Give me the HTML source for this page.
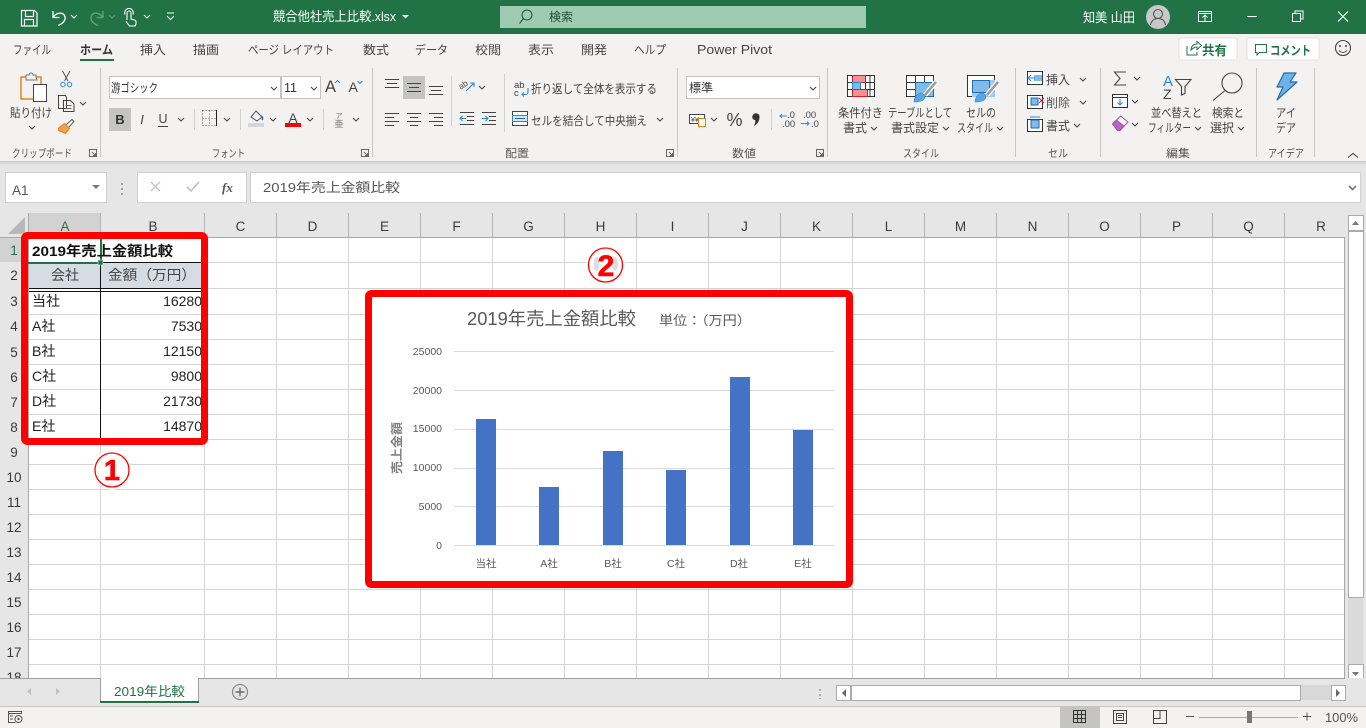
<!DOCTYPE html>
<html lang="ja"><head><meta charset="utf-8"><title>競合他社売上比較.xlsx</title>
<style>
html,body{margin:0;padding:0;width:1366px;height:728px;overflow:hidden;background:#fff}
svg{display:block}
text{font-family:"Liberation Sans","Noto Sans CJK JP",sans-serif;font-size:12px;fill:#444}
.w{fill:#fff}.g{fill:#595959}
.h{font-size:13.5px;fill:#3a3a3a;text-anchor:middle}
.c{font-size:14px;fill:#222}
.l{font-size:11px;fill:#555}
.a{font-size:10.5px;fill:#595959;text-anchor:end}
.x{font-size:10.5px;fill:#595959;text-anchor:middle}
.ch{fill:none;stroke:#444;stroke-width:1.1}
</style></head><body>
<svg width="1366" height="728" viewBox="0 0 1366 728" xmlns="http://www.w3.org/2000/svg">
<defs>
<path id="cv" d="M0 0l3 3 3-3" fill="none" stroke="#444" stroke-width="1.1"/>
<path id="lc" d="M0.5 0.5h7v7h-7zM3 3l3.5 3.5M6.5 4v2.5H4" fill="none" stroke="#666" stroke-width="1"/>
<linearGradient id="sh" x1="0" y1="0" x2="0" y2="1"><stop offset="0" stop-color="#c9c9c9"/><stop offset="1" stop-color="#e6e6e6"/></linearGradient>
</defs>

<!-- base -->
<rect width="1366" height="728" fill="#e6e6e6"/>
<rect width="1366" height="34" fill="#217346"/>
<rect y="34" width="1366" height="127" fill="#f3f2f1"/>
<rect y="161" width="1366" height="4" fill="url(#sh)"/>

<!-- title bar -->
<path d="M21.5 10.5h13l2.5 2.5v13h-15.500zM25.500 10.500v6h8v-6M24.500 25.500v-6h9v6" fill="none" stroke="#fff" stroke-width="1.200"/>
<path d="M53 11v6.500h6.500M53 17.500C57 11 66 12 65 19C64.500 22 61 24.500 58 25.500" fill="none" stroke="#fff" stroke-width="1.300"/>
<path d="M71 15l3 3 3-3" fill="none" stroke="#fff"/>
<path d="M103 11v6.500h-6.500M103 17.500C99 11 90 12 91 19C91.500 22 95 24.500 98 25.500" fill="none" stroke="#66a182" stroke-width="1.300"/>
<path d="M109 15l3 3 3-3" fill="none" stroke="#66a182"/>
<path d="M127 20V13a2 2 0 0 1 4 0v6l3.500 1a2 2 0 0 1 1.500 2v2l-1 2h-5.500l-3.500-4.500M125 14.500a4.500 4.500 0 0 1 3-6h2a4.500 4.500 0 0 1 3 6" fill="none" stroke="#fff" stroke-width="1.100"/>
<path d="M144 15l3 3 3-3" fill="none" stroke="#fff"/>
<path d="M167 13h7M167 16l3.500 3.500 3.500-3.500" fill="none" stroke="#fff"/>
<text x="273" y="21" class="w" style="font-size:13px" textLength="123" lengthAdjust="spacingAndGlyphs">競合他社売上比較.xlsx</text>
<path d="M402 15h7l-3.500 3.500z" fill="#fff"/>
<rect x="500" y="6" width="366" height="22" fill="#9fcbb2"/>
<circle cx="527" cy="15" r="5" fill="none" stroke="#1f5c3c" stroke-width="1.100"/><path d="M523.500 18.500l-4 5" stroke="#1f5c3c" stroke-width="1.100"/>
<text x="549" y="21" style="font-size:12px;fill:#1f4e35">検索</text>
<text x="1083" y="22" class="w" style="font-size:13px" textLength="52" lengthAdjust="spacingAndGlyphs">知美 山田</text>
<circle cx="1158" cy="17" r="12" fill="#c8c8c8"/><circle cx="1158" cy="14" r="4.500" fill="none" stroke="#555" stroke-width="1.100"/><path d="M1150.500 25c1-5 4-6.500 7.500-6.500s6.500 1.500 7.500 6.500" fill="none" stroke="#555" stroke-width="1.100"/>
<path d="M1198.500 11.500h13v10h-13zM1198.500 13.500h13M1205 21v-6M1202.500 17.500l2.500-2.500 2.500 2.500" fill="none" stroke="#fff"/>
<path d="M1247 16.500h10" stroke="#fff"/>
<path d="M1292.500 13.500h8v8h-8zM1295 13.500v-2.500h8v8h-2.500" fill="none" stroke="#fff"/>
<path d="M1338 11.500l10 10M1348 11.500l-10 10" stroke="#fff" stroke-width="1.100"/>

<!-- tabs -->
<g style="font-size:12.500px">
<text x="13" y="54" textLength="38" lengthAdjust="spacingAndGlyphs">ファイル</text>
<text x="80" y="54" style="font-weight:700;fill:#333" textLength="33" lengthAdjust="spacingAndGlyphs">ホーム</text>
<text x="140" y="54" textLength="26" lengthAdjust="spacingAndGlyphs">挿入</text>
<text x="193" y="54" textLength="26" lengthAdjust="spacingAndGlyphs">描画</text>
<text x="248" y="54" textLength="86" lengthAdjust="spacingAndGlyphs">ページ レイアウト</text>
<text x="363" y="54" textLength="26" lengthAdjust="spacingAndGlyphs">数式</text>
<text x="415" y="54" textLength="33" lengthAdjust="spacingAndGlyphs">データ</text>
<text x="475" y="54" textLength="26" lengthAdjust="spacingAndGlyphs">校閲</text>
<text x="528" y="54" textLength="26" lengthAdjust="spacingAndGlyphs">表示</text>
<text x="581" y="54" textLength="26" lengthAdjust="spacingAndGlyphs">開発</text>
<text x="634" y="54" textLength="32" lengthAdjust="spacingAndGlyphs">ヘルプ</text>
<text x="697" y="54" style="font-size:13px" textLength="75" lengthAdjust="spacingAndGlyphs">Power Pivot</text>
</g>
<rect x="80" y="59" width="34" height="2" fill="#217346"/>
<rect x="1179" y="38" width="58" height="22" rx="2" fill="#fff" stroke="#e5e3e1"/>
<path d="M1187 46v9h10v-3M1191 50c0-4 3-6 6-6v-2.500l4.500 4-4.500 4V47c-2 0-4 1-6 3z" fill="none" stroke="#217346"/>
<text x="1202" y="55" style="font-size:13px;font-weight:700;fill:#217346" textLength="25" lengthAdjust="spacingAndGlyphs">共有</text>
<rect x="1247" y="38" width="72" height="22" rx="2" fill="#fff" stroke="#e5e3e1"/>
<path d="M1255.500 44.500h11v8h-7l-2.500 2.500v-2.500h-1.500z" fill="none" stroke="#217346"/>
<text x="1270" y="55" style="font-size:12.500px;font-weight:700;fill:#217346" textLength="41" lengthAdjust="spacingAndGlyphs">コメント</text>
<circle cx="1343" cy="48" r="7.500" fill="none" stroke="#444" stroke-width="1.100"/><circle cx="1340" cy="46" r="1" fill="#444"/><circle cx="1346" cy="46" r="1" fill="#444"/><path d="M1339 50.500c2 2.500 6 2.500 8 0" fill="none" stroke="#444"/>

<!-- ribbon dividers -->
<path d="M100.500 68v89M372.500 68v89M677.500 68v89M827.500 68v89M1015.500 68v89M1100.500 68v89M1256.500 68v89M1314.500 68v89" stroke="#c6c6c6"/>
<path d="M194.500 109v21M240.500 109v21M323.500 109v21M451.500 76v50M504.500 74v58M771.500 109v21" stroke="#d0d0d0"/>

<!-- clipboard -->
<path d="M21 77h20v22H21z" fill="#f3f2f1" stroke="#e6811a" stroke-width="1.500"/>
<path d="M26 77v-2h3a2 2 0 0 1 4 0h3v2l1 3H26z" fill="#f3f2f1" stroke="#777"/>
<rect x="33.500" y="84.500" width="13" height="17" fill="#fff" stroke="#444"/>
<text x="10" y="117" textLength="42" lengthAdjust="spacingAndGlyphs">貼り付け</text>
<use href="#cv" x="29" y="126"/>
<path d="M62.500 71l5.500 10M70 71l-5.500 10" stroke="#555" fill="none"/><circle cx="63" cy="84.500" r="2.200" fill="none" stroke="#2b88d8"/><circle cx="69.500" cy="84.500" r="2.200" fill="none" stroke="#2b88d8"/>
<path d="M58.500 95.500h7l1 2v11h-8zM63.500 100.500h7l3.500 3.500v7.500H63.500z" fill="#f3f2f1" stroke="#444"/><path d="M65.500 105.500h6M65.500 108.500h6" stroke="#666"/>
<use href="#cv" x="80" y="102"/>
<path d="M66 125l6-5.500 2 2-5.500 6" fill="#fff" stroke="#555"/><path d="M58.500 128l6-4.500 5 5-4 5-7-3z" fill="#f0a24d" stroke="#e6811a"/>

<!-- font -->
<rect x="109.500" y="76.500" width="171" height="22" fill="#fff" stroke="#c4c4c4"/>
<rect x="281.500" y="76.500" width="39" height="22" fill="#fff" stroke="#c4c4c4"/>
<text x="111" y="92" textLength="47" lengthAdjust="spacingAndGlyphs" style="fill:#333">游ゴシック</text>
<text x="284" y="92" style="fill:#333;font-size:12.500px">11</text>
<use href="#cv" x="271" y="87"/><use href="#cv" x="311" y="87"/>
<text x="325" y="92" style="font-size:16.500px;fill:#444">A</text><path d="M335 83l2.500-2.500 2.500 2.500" fill="none" stroke="#2b88d8"/>
<text x="348.500" y="92" style="font-size:14px;fill:#444">A</text><path d="M357.500 81l2.500 2.500 2.500-2.500" fill="none" stroke="#2b88d8"/>
<rect x="109" y="108" width="22" height="23" fill="#c4c4c2"/>
<text x="120" y="124" style="font-size:13px;font-weight:700;text-anchor:middle;fill:#333">B</text>
<text x="142" y="124" style="font-size:13px;font-style:italic;text-anchor:middle">I</text>
<text x="163" y="123" style="font-size:12.500px;text-anchor:middle">U</text><path d="M158 126.500h10" stroke="#444"/>
<use href="#cv" x="178" y="118"/>
<path d="M202.500 110.500h14v15h-14zM202.500 118.500h14M209.500 110.500v15" fill="none" stroke="#666" stroke-dasharray="1 2"/><path d="M216.500 110v16" stroke="#222"/>
<use href="#cv" x="224" y="118"/>
<path d="M251 117l5-6 6 6-5 4z" fill="none" stroke="#555"/><path d="M261 116c2 1 2 3 1 4" fill="none" stroke="#1f6cb0" stroke-width="1.500"/><rect x="248" y="123" width="16" height="4" fill="#cfd8e0"/>
<use href="#cv" x="270" y="118"/>
<text x="293" y="123" style="font-size:13.500px;text-anchor:middle">A</text><rect x="285" y="123" width="16" height="4" fill="#f00"/>
<use href="#cv" x="307" y="118"/>
<text x="339" y="118" style="font-size:7px;text-anchor:middle;fill:#777">ア</text><text x="339" y="127" style="font-size:9px;text-anchor:middle;fill:#777">亜</text>
<use href="#cv" x="353" y="118"/>
<text x="212" y="157" class="l" textLength="33" lengthAdjust="spacingAndGlyphs">フォント</text>
<text x="12" y="157" class="l" textLength="60" lengthAdjust="spacingAndGlyphs">クリップボード</text>
<use href="#lc" x="89" y="149"/><use href="#lc" x="361" y="149"/>

<!-- alignment -->
<rect x="403" y="76" width="22" height="23" fill="#c4c4c2"/>
<path d="M385 79.500h14M387 83.500h10M385 87.500h14M407 83.500h14M409 87.500h10M407 91.500h14M429 86.500h14M431 90.500h10M429 94.500h14" stroke="#444"/>
<path d="M385 113.500h14M385 117.500h9M385 121.500h14M385 125.500h9M407 113.500h14M410 117.500h8M407 121.500h14M410 125.500h8M429 113.500h14M434 117.500h9M429 121.500h14M434 125.500h9" stroke="#444"/>
<text x="459" y="88" style="font-size:8.500px" transform="rotate(-35 463 86)">ab</text><path d="M466 91l8-8M470 83h4v4" fill="none" stroke="#2b88d8" stroke-width="1.100"/>
<use href="#cv" x="479" y="86"/>
<path d="M460 112.500h14M467 116.500h7M467 120.500h7M460 124.500h14M482 112.500h14M489 116.500h7M489 120.500h7M482 124.500h14" stroke="#444"/>
<path d="M466 118.500h-6M462.500 116l-2.500 2.500 2.500 2.500M482 118.500h6M485.500 116l2.500 2.500-2.500 2.500" fill="none" stroke="#2b88d8"/>
<text x="514" y="88" style="font-size:9.500px">ab</text><text x="514" y="96" style="font-size:9.500px">c</text><path d="M528 88v4a2.500 2.500 0 0 1-2.500 2.500H522M524 92.500l-2 2 2 2" fill="none" stroke="#2b88d8" stroke-width="1.100"/>
<text x="531" y="93" textLength="126" lengthAdjust="spacingAndGlyphs">折り返して全体を表示する</text>
<rect x="512.500" y="111.500" width="15" height="14" fill="#fff" stroke="#444"/><rect x="512.500" y="115.500" width="15" height="6" fill="#cfe6f7" stroke="#2b88d8"/><path d="M515 118.500h10" stroke="#1f6cb0"/>
<text x="531" y="125" textLength="116" lengthAdjust="spacingAndGlyphs">セルを結合して中央揃え</text>
<use href="#cv" x="657" y="118"/>
<text x="505" y="157" class="l" textLength="24" lengthAdjust="spacingAndGlyphs">配置</text>
<use href="#lc" x="666" y="149"/>

<!-- number -->
<rect x="686.500" y="76.500" width="133" height="22" fill="#fff" stroke="#c4c4c4"/>
<text x="689" y="92" style="fill:#333" textLength="24" lengthAdjust="spacingAndGlyphs">標準</text>
<use href="#cv" x="810" y="87"/>
<rect x="689.500" y="114.500" width="15" height="9" fill="#fff" stroke="#444"/><text x="691" y="122" style="font-size:7px">¥¥</text>
<rect x="698.500" y="118.500" width="7" height="8" fill="#fff" stroke="#e6811a"/>
<use href="#cv" x="711" y="118"/>
<text x="734.500" y="126" style="font-size:18px;text-anchor:middle;fill:#444">%</text>
<path d="M753 115a3.500 3.500 0 0 1 6.500 2c0 4-2 7-5.500 9 1.200-3 1.700-5 1.200-6a3 3 0 0 1-2.200-5z" fill="#333"/>
<text x="787" y="118" style="font-size:9.500px">.0</text><text x="782" y="127" style="font-size:9.500px">.00</text><path d="M787 116h-7M782 114l-2 2 2 2" fill="none" stroke="#2b88d8"/>
<text x="803" y="118" style="font-size:9.500px">.00</text><text x="811" y="127" style="font-size:9.500px">.0</text><path d="M801 123.500h8M807 121.500l2 2-2 2" fill="none" stroke="#2b88d8"/>
<text x="732" y="157" class="l" textLength="24" lengthAdjust="spacingAndGlyphs">数値</text>
<use href="#lc" x="816" y="149"/>

<!-- styles -->
<rect x="847.500" y="75.500" width="27" height="21" fill="#fff" stroke="#333"/>
<path d="M847.500 82.500h27M847.500 89.500h27M856.500 75.500v21M865.500 75.500v21M870 75.500v21" stroke="#333"/>
<rect x="852.500" y="75.500" width="13" height="7" fill="#f98f93" stroke="#d81e24"/>
<rect x="852.500" y="82.500" width="8" height="7" fill="#7fbae9" stroke="#2b88d8"/>
<rect x="852.500" y="89.500" width="15" height="7" fill="#f98f93" stroke="#d81e24"/>
<text x="838" y="117" textLength="45" lengthAdjust="spacingAndGlyphs">条件付き</text>
<text x="843" y="132" textLength="24" lengthAdjust="spacingAndGlyphs">書式</text><use href="#cv" x="871" y="127"/>
<rect x="906.500" y="75.500" width="27" height="21" fill="#fff" stroke="#333"/>
<path d="M906.500 82.500h27M906.500 89.500h27M915.500 75.500v21M924.500 75.500v21" stroke="#333"/>
<rect x="915.500" y="82.500" width="18" height="14" fill="#7fbae9" stroke="#1f6cb0"/>
<path d="M936 82l-11 13" stroke="#fff" stroke-width="5"/><path d="M936 82l-11 13" stroke="#999" stroke-width="2.500"/><path d="M914 102c0-5 4-9 8-9l3 3c0 5-5 6-11 6z" fill="#5aa5e3" stroke="#2b88d8" stroke-width=".6"/>
<text x="888" y="117" textLength="64" lengthAdjust="spacingAndGlyphs">テーブルとして</text>
<text x="891" y="132" textLength="48" lengthAdjust="spacingAndGlyphs">書式設定</text><use href="#cv" x="943" y="127"/>
<rect x="967.500" y="75.500" width="27" height="21" fill="#fff" stroke="#333"/>
<rect x="972" y="80" width="23" height="17" fill="#9ccbf0"/><rect x="972.500" y="80.500" width="17" height="12" fill="#7fbae9" stroke="#1f6cb0"/>
<path d="M998 82l-11 13" stroke="#fff" stroke-width="5"/><path d="M998 82l-11 13" stroke="#999" stroke-width="2.500"/><path d="M975 102c0-5 4-9 8-9l3 3c0 5-5 6-11 6z" fill="#5aa5e3" stroke="#2b88d8" stroke-width=".6"/>
<text x="966" y="117" textLength="30" lengthAdjust="spacingAndGlyphs">セルの</text>
<text x="957" y="132" textLength="36" lengthAdjust="spacingAndGlyphs">スタイル</text><use href="#cv" x="997" y="127"/>
<text x="903" y="157" class="l" textLength="36" lengthAdjust="spacingAndGlyphs">スタイル</text>

<!-- cells -->
<rect x="1027.500" y="71.500" width="15" height="13" fill="#fff" stroke="#333"/><rect x="1034" y="75" width="8" height="6" fill="#7fbae9"/><path d="M1035 78h-7M1031 75l-3 3 3 3" fill="none" stroke="#2b88d8"/>
<text x="1046" y="84" textLength="24" lengthAdjust="spacingAndGlyphs">挿入</text><use href="#cv" x="1080" y="78"/>
<path d="M1027.500 95.500h15v13h-15z" fill="#fff" stroke="#333"/><rect x="1031" y="98" width="7" height="7" fill="#7fbae9" stroke="#1f6cb0"/><path d="M1039 98l5 5M1044 98l-5 5" stroke="#e81123"/>
<text x="1046" y="107" textLength="24" lengthAdjust="spacingAndGlyphs" style="fill:#555">削除</text><use href="#cv" x="1080" y="101"/>
<rect x="1027.500" y="119.500" width="15" height="12" fill="#fff" stroke="#333"/><rect x="1031" y="120" width="8" height="8" fill="#7fbae9" stroke="#1f6cb0"/><path d="M1030 117h10" stroke="#2b88d8"/>
<text x="1046" y="130" textLength="24" lengthAdjust="spacingAndGlyphs">書式</text><use href="#cv" x="1074" y="124"/>
<text x="1048" y="157" class="l" textLength="20" lengthAdjust="spacingAndGlyphs">セル</text>

<!-- editing -->
<path d="M1126 72h-11.500l5.500 6.500-5.500 6.500H1126" fill="none" stroke="#444" stroke-width="1.100"/><use href="#cv" x="1134" y="77"/>
<rect x="1112.500" y="94.500" width="15" height="13" fill="#fff" stroke="#333"/><path d="M1112.500 97.500h15" stroke="#333"/><path d="M1120 99v6M1117.500 102.500l2.500 2.500 2.500-2.500" fill="none" stroke="#2b88d8" stroke-width="1.100"/><use href="#cv" x="1132" y="100"/>
<path d="M1112.500 124l8-8 7.500 6-8 8.500h-2z" fill="#fff" stroke="#a54fb5"/><path d="M1112.500 124l4-4 7.500 6-4.500 4.500h-2z" fill="#b765c6" stroke="#a54fb5"/><use href="#cv" x="1132" y="123"/>
<text x="1163" y="86" style="font-size:15px;fill:#2b88d8">A</text><text x="1163" y="99" style="font-size:14px;fill:#444">Z</text>
<path d="M1175.500 79.500h15.500l-6 7v7l-3.500 1.500v-8.500z" fill="none" stroke="#444" stroke-width="1.100"/>
<text x="1151" y="117" textLength="51" lengthAdjust="spacingAndGlyphs">並べ替えと</text>
<text x="1148" y="132" textLength="43" lengthAdjust="spacingAndGlyphs">フィルター</text><use href="#cv" x="1195" y="127"/>
<circle cx="1232" cy="83" r="10" fill="none" stroke="#444" stroke-width="1.100"/><path d="M1225 90.500l-12 10" stroke="#444" stroke-width="1.100"/>
<text x="1212" y="117" textLength="32" lengthAdjust="spacingAndGlyphs">検索と</text>
<text x="1210" y="132" textLength="24" lengthAdjust="spacingAndGlyphs">選択</text><use href="#cv" x="1238" y="127"/>
<text x="1166" y="157" class="l" textLength="24" lengthAdjust="spacingAndGlyphs">編集</text>

<!-- ideas -->
<path d="M1284 73h12l-6 9h7l-20 18 6-13h-6z" fill="#6eb4ea" stroke="#1f6cb0" stroke-width="1.200" stroke-linejoin="round"/>
<text x="1276" y="117" textLength="20" lengthAdjust="spacingAndGlyphs">アイ</text>
<text x="1276" y="132" textLength="20" lengthAdjust="spacingAndGlyphs">デア</text>
<text x="1268" y="157" class="l" textLength="36" lengthAdjust="spacingAndGlyphs">アイデア</text>
<path d="M1348 157.500l5-4 5 4" fill="none" stroke="#444" stroke-width="1.100"/>

<!-- formula bar -->
<rect x="5.500" y="172.500" width="101" height="30" fill="#fff" stroke="#d0d0d0"/>
<text x="12" y="195" style="font-size:13.500px;fill:#555">A1</text>
<path d="M92 185h8l-4 4z" fill="#777"/>
<path d="M122 183v2M122 188v2M122 193v2" stroke="#888" stroke-width="1.500"/>
<rect x="137.500" y="172.500" width="109" height="30" fill="#fff" stroke="#d0d0d0"/>
<rect x="250.500" y="172.500" width="1110" height="30" fill="#fff" stroke="#d0d0d0"/>
<path d="M151 182l9 9M160 182l-9 9" stroke="#c4c4c4" stroke-width="1.300"/>
<path d="M187 187l4 4 8-9" fill="none" stroke="#c4c4c4" stroke-width="1.800"/>
<text x="222" y="192" style="font-family:'Liberation Serif',serif;font-style:italic;font-weight:700;font-size:13px;fill:#555">fx</text>
<text x="263" y="192" style="font-size:13px;fill:#555" textLength="137" lengthAdjust="spacingAndGlyphs">2019年売上金額比較</text>
<path d="M1349 186l3.500 3.500 3.500-3.500" fill="none" stroke="#666" stroke-width="1.500"/>

<!-- headers -->
<rect x="29" y="213" width="72" height="24" fill="#d2d2d2"/>
<rect x="0" y="238" width="28" height="24" fill="#d2d2d2"/>
<path d="M8 234L25 217V234z" fill="#b8b8b8"/>
<path d="M100.500 213v24M204.500 213v24M276.500 213v24M348.500 213v24M420.500 213v24M492.500 213v24M564.500 213v24M636.500 213v24M708.500 213v24M780.500 213v24M852.500 213v24M924.500 213v24M996.500 213v24M1068.500 213v24M1140.500 213v24M1212.500 213v24M1284.500 213v24" stroke="#b4b4b4"/>
<g class="hd">
<text x="65" y="231" class="h" style="fill:#217346">A</text><text x="153" y="231" class="h">B</text><text x="240.500" y="231" class="h">C</text><text x="312.500" y="231" class="h">D</text><text x="384.500" y="231" class="h">E</text><text x="456.500" y="231" class="h">F</text><text x="528.500" y="231" class="h">G</text><text x="600.500" y="231" class="h">H</text><text x="672.500" y="231" class="h">I</text><text x="744.500" y="231" class="h">J</text><text x="816.500" y="231" class="h">K</text><text x="888.500" y="231" class="h">L</text><text x="960.500" y="231" class="h">M</text><text x="1032.500" y="231" class="h">N</text><text x="1104.500" y="231" class="h">O</text><text x="1176.500" y="231" class="h">P</text><text x="1248.500" y="231" class="h">Q</text><text x="1321" y="231" class="h">R</text>
</g>
<g>
<text x="14" y="255" class="h" style="fill:#217346">1</text><text x="14" y="280" class="h">2</text><text x="14" y="306" class="h">3</text><text x="14" y="331" class="h">4</text><text x="14" y="357" class="h">5</text><text x="14" y="382" class="h">6</text><text x="14" y="407" class="h">7</text><text x="14" y="432" class="h">8</text><text x="14" y="457" class="h">9</text><text x="14" y="482" class="h">10</text><text x="14" y="507" class="h">11</text><text x="14" y="532" class="h">12</text><text x="14" y="557" class="h">13</text><text x="14" y="582" class="h">14</text><text x="14" y="607" class="h">15</text><text x="14" y="632" class="h">16</text><text x="14" y="657" class="h">17</text><text x="14" y="682" class="h">18</text>
</g>

<!-- sheet -->
<rect x="29" y="238" width="1316" height="440" fill="#fff"/>
<path d="M100.500 238V678M204.500 238V678M276.500 238V678M348.500 238V678M420.500 238V678M492.500 238V678M564.500 238V678M636.500 238V678M708.500 238V678M780.500 238V678M852.500 238V678M924.500 238V678M996.500 238V678M1068.500 238V678M1140.500 238V678M1212.500 238V678M1284.500 238V678M29 262.500H1345M29 288.500H1345M29 314.500H1345M29 339.500H1345M29 364.500H1345M29 389.500H1345M29 414.500H1345M29 439.500H1345M29 464.500H1345M29 489.500H1345M29 514.500H1345M29 539.500H1345M29 564.500H1345M29 589.500H1345M29 614.500H1345M29 639.500H1345M29 664.500H1345" stroke="#d4d4d4"/>
<path d="M28.500 213V678M0 237.500H1345M1344.500 237V678" stroke="#a8a8a8"/>

<!-- table -->
<rect x="29" y="263" width="175" height="25" fill="#d6dce4"/>
<path d="M29 262.500H204M29 288.500H204M29 291.500H204M100.500 263V439" stroke="#111"/>
<rect x="100" y="239" width="2" height="23" fill="#217346"/>
<rect x="28" y="262" width="72" height="2" fill="#217346"/>
<rect x="98" y="260" width="5" height="5" fill="#217346" stroke="#fff" stroke-width="0.500"/>
<text x="32" y="256" style="font-size:14px;font-weight:700;fill:#111" textLength="141" lengthAdjust="spacingAndGlyphs">2019年売上金額比較</text>
<text x="65" y="280" style="font-size:14px;text-anchor:middle;fill:#444">会社</text>
<text x="108" y="280" style="font-size:14px;fill:#444" textLength="88" lengthAdjust="spacingAndGlyphs">金額（万円）</text>
<text x="32" y="306" class="c">当社</text><text x="32" y="331" class="c">A社</text><text x="32" y="356" class="c">B社</text><text x="32" y="381" class="c">C社</text><text x="32" y="406" class="c">D社</text><text x="32" y="431" class="c">E社</text>
<g style="text-anchor:end">
<text x="202" y="306" class="c" style="text-anchor:end">16280</text><text x="202" y="331" class="c" style="text-anchor:end">7530</text><text x="202" y="356" class="c" style="text-anchor:end">12150</text><text x="202" y="381" class="c" style="text-anchor:end">9800</text><text x="202" y="406" class="c" style="text-anchor:end">21730</text><text x="202" y="431" class="c" style="text-anchor:end">14870</text>
</g>

<!-- chart -->
<rect x="369" y="294" width="481" height="291" fill="#fff"/>
<path d="M454 351.500H834M454 390.500H834M454 429.500H834M454 468.500H834M454 506.500H834M454 545.500H834" stroke="#d9d9d9"/>
<rect x="476" y="419" width="20" height="126" fill="#4472c4"/><rect x="539" y="487" width="20" height="58" fill="#4472c4"/><rect x="603" y="451" width="20" height="94" fill="#4472c4"/><rect x="666" y="470" width="20" height="75" fill="#4472c4"/><rect x="730" y="377" width="20" height="168" fill="#4472c4"/><rect x="793" y="430" width="20" height="115" fill="#4472c4"/>
<text x="467" y="325" style="font-size:18px;fill:#595959" textLength="169" lengthAdjust="spacingAndGlyphs">2019年売上金額比較</text>
<text x="659" y="325" style="font-size:13px;fill:#595959" textLength="92" lengthAdjust="spacingAndGlyphs">単位：（万円）</text>
<text x="442" y="355" class="a">25000</text><text x="442" y="394" class="a">20000</text><text x="442" y="432" class="a">15000</text><text x="442" y="471" class="a">10000</text><text x="442" y="510" class="a">5000</text><text x="442" y="549" class="a">0</text>
<text x="486" y="567" class="x">当社</text><text x="549" y="567" class="x">A社</text><text x="613" y="567" class="x">B社</text><text x="676" y="567" class="x">C社</text><text x="739" y="567" class="x">D社</text><text x="803" y="567" class="x">E社</text>
<text transform="translate(401 474) rotate(-90)" style="font-size:12px;font-weight:700;fill:#7f7f7f" textLength="52" lengthAdjust="spacingAndGlyphs">売上金額</text>

<!-- red callouts -->
<rect x="24.500" y="235.500" width="180" height="206" rx="3" fill="none" stroke="#f00" stroke-width="7"/>
<rect x="368.500" y="293.500" width="481" height="291" rx="3" fill="none" stroke="#f00" stroke-width="7"/>
<circle cx="112" cy="470" r="20" fill="#fff" opacity=".75"/><circle cx="112" cy="470" r="17" fill="#fff" stroke="#f00" stroke-width="1.300"/>
<text x="112" y="480" style="font-size:29px;font-weight:700;fill:#f00;stroke:#f00;stroke-width:.6;text-anchor:middle">1</text>
<circle cx="605.500" cy="265" r="20" fill="#fff" opacity=".75"/><circle cx="605.500" cy="265" r="17" fill="#fff" stroke="#f00" stroke-width="1.300"/>
<ellipse cx="596.500" cy="264" rx="3" ry="7" fill="#dedede"/><ellipse cx="615" cy="264" rx="3" ry="7" fill="#dedede"/>
<text x="606" y="276" style="font-size:30px;font-weight:700;fill:#f00;stroke:#f00;stroke-width:.6;text-anchor:middle">2</text>

<!-- vertical scrollbar -->
<rect x="1346" y="213" width="20" height="465" fill="#e6e6e6"/>
<rect x="1348" y="231" width="15" height="433" fill="#dadada"/>
<rect x="1348.500" y="215.500" width="15" height="15" fill="#fff" stroke="#ababab"/>
<path d="M1352 225l3.500-4 3.500 4z" fill="#777"/>
<rect x="1348.500" y="231.500" width="15" height="366" fill="#fff" stroke="#ababab"/>
<rect x="1348.500" y="664.500" width="15" height="14" fill="#fff" stroke="#ababab"/>
<path d="M1352 672l3.500 4 3.500-4z" fill="#777"/>

<!-- tab bar -->
<rect x="0" y="678" width="1366" height="28" fill="#e6e6e6"/>
<path d="M0 678.500H1345" stroke="#9e9e9e"/>
<path d="M31 688v7l-4-3.500zM56 688v7l4-3.500z" fill="#c0c0c0"/>
<rect x="100.500" y="678" width="98" height="25" fill="#fff"/>
<path d="M100.500 678v25M198.500 678v25" stroke="#9e9e9e"/>
<rect x="100" y="701" width="99" height="2" fill="#217346"/>
<text x="114" y="696" style="font-size:13px;fill:#217346" textLength="71" lengthAdjust="spacingAndGlyphs">2019年比較</text>
<circle cx="240" cy="692" r="7.500" fill="none" stroke="#8a8a8a" stroke-width="1.200"/><path d="M235.500 692h9M240 687.500v9" stroke="#666" stroke-width="1.400"/>
<path d="M820 689v2M820 694v2M820 699v-1" stroke="#999" stroke-width="1.500"/>
<rect x="836" y="685" width="509" height="15" fill="#d8d8d8"/>
<rect x="836.500" y="685.500" width="14" height="15" fill="#fff" stroke="#ababab"/>
<path d="M846 689v8l-4-4z" fill="#666"/>
<rect x="851.500" y="685.500" width="449" height="15" fill="#fff" stroke="#ababab"/>
<rect x="1331.500" y="685.500" width="14" height="15" fill="#fff" stroke="#ababab"/>
<path d="M1336 689v8l4-4z" fill="#666"/>

<!-- status bar -->
<rect x="0" y="706" width="1366" height="22" fill="#f3f2f1"/>
<path d="M0 706.500H1366" stroke="#c8c6c4"/>
<rect x="1060" y="707" width="40" height="21" fill="#c4c4c2"/>
<path d="M8.500 711.500h13v2h-13zM8.500 713.500v9h7M10 716h3M10 719h3" fill="none" stroke="#555"/><circle cx="18.500" cy="719" r="3.500" fill="none" stroke="#555"/><circle cx="18.500" cy="719" r="1.200" fill="#555"/>
<path d="M1073.500 710.500h12v12h-12zM1073.500 714.500h12M1073.500 718.500h12M1077.500 710.500v12M1081.500 710.500v12" fill="none" stroke="#333"/>
<path d="M1113.500 710.500h13v13h-13zM1116.500 713.500h7v7h-7zM1118 715.500h4M1118 717.500h4" fill="none" stroke="#444"/>
<path d="M1153.500 710.500h13v13h-13zM1153.500 718.500h6.500v-8" fill="none" stroke="#444"/>
<path d="M1186 716.500h8M1303 716.500h8M1307 712.500v8" stroke="#555"/>
<path d="M1199 717.500h99" stroke="#aaa"/>
<rect x="1247" y="711" width="5" height="12" fill="#777"/>
<text x="1325" y="722" style="font-size:13px;fill:#555" textLength="33" lengthAdjust="spacingAndGlyphs">100%</text>
</svg>
</body></html>
